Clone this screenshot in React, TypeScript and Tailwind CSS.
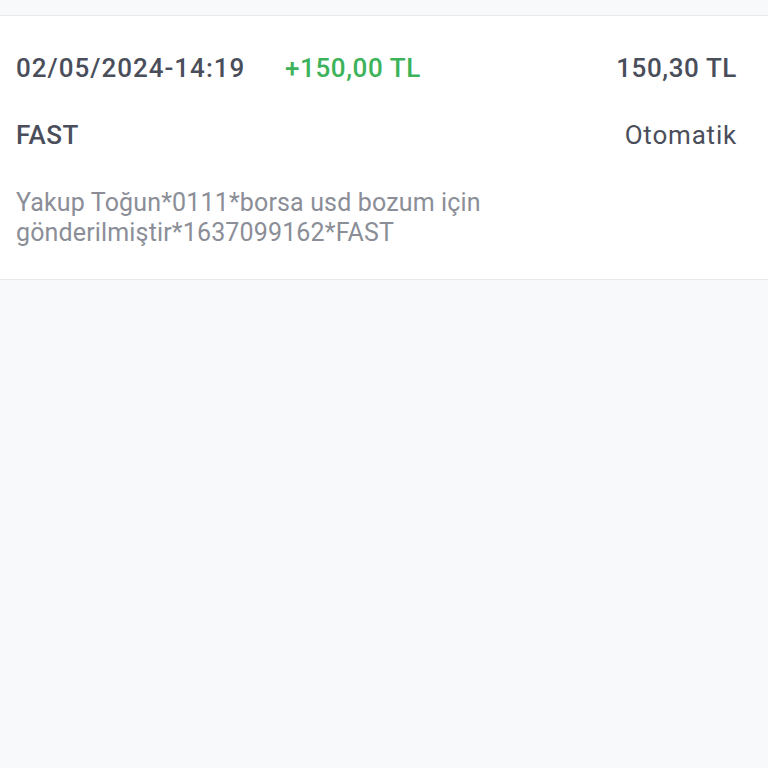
export default function App() {
  return (
    <div className="min-h-[768px] w-full bg-[#f8f9fb]" style={{ fontFamily: "Roboto, 'Noto Sans', sans-serif" }}>
      <div className="h-[15px]" />
      <div className="border-y border-[#e8e9ec] bg-white pl-4 pr-[31px] pt-[37px] pb-[31px]">
        <div className="flex h-[30px] items-center text-[26px] font-medium leading-[30px]">
          <span className="w-[269px] tracking-[1px] text-[#4a4e5b]">02/05/2024-14:19</span>
          <span className="tracking-[0.6px] text-[#3cb35a]">+150,00 TL</span>
          <span className="ml-auto tracking-[0.6px] text-[#4a4e5b]">150,30 TL</span>
        </div>
        <div className="mt-[37px] flex h-[30px] items-center text-[26px] leading-[30px] text-[#4a4e5b]">
          <span className="font-medium tracking-[0.5px]">FAST</span>
          <span className="ml-auto tracking-[0.8px]">Otomatik</span>
        </div>
        <div className="mt-[38px] w-[520px] text-[25px] leading-[30px] tracking-[0.15px] text-[#8b8e97]">
          Yakup Toğun*0111*borsa usd bozum için gönderilmiştir*1637099162*FAST
        </div>
      </div>
    </div>
  );
}
